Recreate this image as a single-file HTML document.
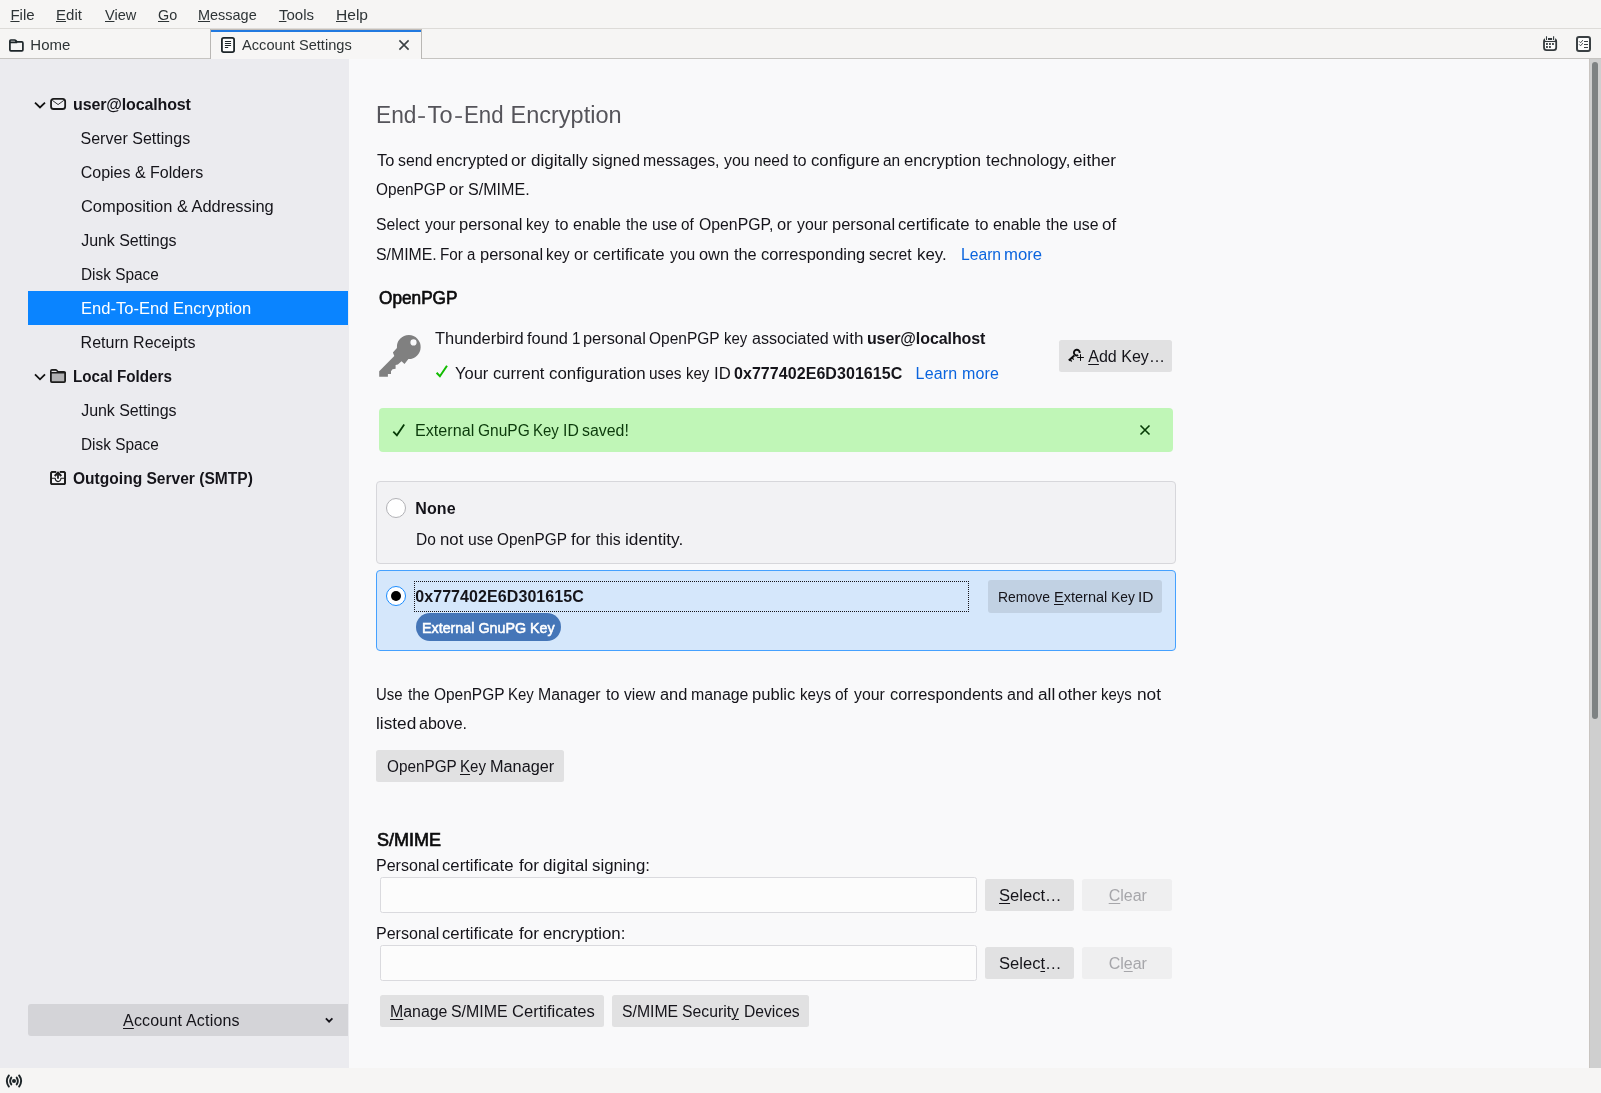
<!DOCTYPE html>
<html><head><meta charset="utf-8"><title>Account Settings</title>
<style>
html,body{margin:0;padding:0}
body{width:1601px;height:1093px;position:relative;overflow:hidden;background:#f6f5f4;font-family:"Liberation Sans",sans-serif;color:#15141a}
.r{position:absolute;box-sizing:border-box}
.t{position:absolute;white-space:pre;line-height:20px}
.t u{text-decoration-thickness:1px;text-underline-offset:1px}
svg{position:absolute;overflow:visible}
.btn{background:#e1e1e2;border-radius:2.5px}
</style></head><body>
<!-- chrome -->
<div class="r" style="left:0;top:0;width:1601px;height:28px;background:#f6f5f4"></div>
<div class="r" style="left:0;top:28px;width:1601px;height:1px;background:#dddbd8"></div>
<div class="r" style="left:0;top:29px;width:1601px;height:29px;background:#f6f5f4"></div>
<div class="r" style="left:0;top:58px;width:1601px;height:1px;background:#c6c4c1"></div>
<!-- active tab -->
<div class="r" style="left:210px;top:29px;width:212px;height:30px;background:#f7f6f5;border-left:1px solid #b9b7b4;border-right:1px solid #b9b7b4"></div>
<div class="r" style="left:211px;top:29px;width:210px;height:1px;background:#c3bcb6"></div>
<div class="r" style="left:211px;top:30px;width:210px;height:2px;background:#2179e0"></div>
<!-- sidebar / content -->
<div class="r" style="left:0;top:59px;width:349px;height:1009px;background:#ebebef"></div>
<div class="r" style="left:349px;top:59px;width:1240px;height:1009px;background:#f9f9fa"></div>
<!-- scrollbar -->
<div class="r" style="left:1589px;top:59px;width:12px;height:1009px;background:#cfcfcf;border-left:1px solid #c9c5c1"></div>
<div class="r" style="left:1592px;top:62px;width:6px;height:657px;background:#7e8283;border-radius:3px"></div>
<!-- status bar -->
<div class="r" style="left:0;top:1068px;width:1601px;height:25px;background:#f6f5f4"></div>
<!-- sidebar items -->
<div class="r" style="left:28px;top:291px;width:320px;height:34px;background:#0a84ff"></div>
<div class="r" style="left:28px;top:1004px;width:320px;height:32px;background:#d4d4d8;border-radius:3px 0 0 3px"></div>
<!-- content -->
<div class="r btn" style="left:1059px;top:340px;width:113px;height:32px"></div>
<div class="r" style="left:379px;top:408px;width:794px;height:44px;background:#c0f6b7;border-radius:4px"></div>
<div class="r" style="left:376px;top:481px;width:800px;height:83px;background:#f2f2f4;border:1px solid #d7d7db;border-radius:4px"></div>
<div class="r" style="left:376px;top:570px;width:800px;height:81px;background:#d5e7fb;border:1px solid #45a1ff;border-radius:4px"></div>
<div class="r" style="left:386px;top:498px;width:20px;height:20px;background:#fff;border:1px solid #b2b2b6;border-radius:50%"></div>
<div class="r" style="left:386px;top:586px;width:20px;height:20px;background:#fff;border:1px solid #1a8cff;border-radius:50%"></div>
<div class="r" style="left:391px;top:591px;width:10px;height:10px;background:#000;border-radius:50%"></div>
<div class="r" style="left:414px;top:581px;width:555px;height:31px;border:1px dotted #15141a"></div>
<div class="r" style="left:416px;top:612.5px;width:145px;height:28.5px;background:#4576b8;border-radius:14px"></div>
<div class="r" style="left:988px;top:580px;width:174px;height:33px;background:#c1d1e3;border-radius:3px"></div>
<div class="r btn" style="left:376px;top:750px;width:188px;height:32px"></div>
<div class="r" style="left:380px;top:877px;width:597px;height:36px;background:#fcfcfc;border:1px solid #dadade;border-radius:2.5px"></div>
<div class="r" style="left:380px;top:945px;width:597px;height:36px;background:#fcfcfc;border:1px solid #dadade;border-radius:2.5px"></div>
<div class="r btn" style="left:985px;top:879px;width:89px;height:32px"></div>
<div class="r btn" style="left:985px;top:947px;width:89px;height:32px"></div>
<div class="r" style="left:1082px;top:879px;width:90px;height:32px;background:#efeff0;border-radius:2.5px"></div>
<div class="r" style="left:1082px;top:947px;width:90px;height:32px;background:#efeff0;border-radius:2.5px"></div>
<div class="r btn" style="left:380px;top:995px;width:224px;height:32px"></div>
<div class="r btn" style="left:612px;top:995px;width:197px;height:32px"></div>
<!--ICONS_START-->
<svg width="1601" height="1093" viewBox="0 0 1601 1093" style="left:0;top:0" fill="none" stroke-linecap="round" stroke-linejoin="round">
<!-- Home tab folder -->
<path d="M9.9 41.6 V40.9 Q9.9 40 10.8 40 H14.6 Q15.3 40 15.8 40.6 L16.9 41.9 H21.9 Q22.9 41.9 22.9 42.9 V49.8 Q22.9 50.8 21.9 50.8 H10.9 Q9.9 50.8 9.9 49.8 Z M10 42.4 H16.5" stroke="#1d2528" stroke-width="1.7"/>
<!-- doc icon in active tab -->
<rect x="221.9" y="37.9" width="12.2" height="14.2" rx="1.8" stroke="#1d2528" stroke-width="1.8" fill="#fcfcfc"/>
<path d="M225.3 41.5 H230.7 M225.3 43.5 H230.7 M225.3 45.5 H230.7 M225.3 47.5 H227.8" stroke="#1d2528" stroke-width="1"/>
<!-- tab close -->
<path d="M399.4 40.4 L408.6 49.6 M408.6 40.4 L399.4 49.6" stroke="#3b4144" stroke-width="1.6" stroke-linecap="butt"/>
<!-- calendar -->
<g stroke="#33393c">
<rect x="1544" y="39" width="12.2" height="11.2" rx="2.6" stroke-width="1.8" fill="#fdfdfd"/>
<path d="M1546.5 35.4 V40.5 M1553.6 35.4 V40.5" stroke="#f8f8f7" stroke-width="3" stroke-linecap="butt"/>
<path d="M1544.3 41.5 H1555.9" stroke-width="1.1" stroke-linecap="butt"/>
<path d="M1546.5 36.2 V40.1 M1553.6 36.2 V40.1" stroke-width="1.1" stroke-linecap="butt"/>
</g>
<g fill="#2b3133"><rect x="1546.05" y="43.1" width="1.8" height="1.8"/><rect x="1549.05" y="43.1" width="1.8" height="1.8"/><rect x="1552.05" y="43.1" width="1.8" height="1.8"/><rect x="1546.05" y="46.1" width="1.8" height="1.8"/><rect x="1549.05" y="46.1" width="1.8" height="1.8"/></g>
<!-- tasks -->
<g stroke="#3a4043">
<rect x="1577" y="37.1" width="13" height="13.8" rx="2" stroke-width="2" fill="#fdfdfd"/>
<path d="M1579.4 41.6 L1580.6 42.8 L1582.6 40.4 M1579.4 44.6 L1580.6 45.8 L1582.6 43.4" stroke-width="0.9"/>
<path d="M1584.4 41.5 H1587.6 M1584.4 44.5 H1587.6 M1584.4 47.5 H1587.6" stroke-width="1"/>
</g>
<!-- sidebar chevrons -->
<path d="M35 102.6 L40 107.5 L45 102.6" stroke="#111" stroke-width="1.8" stroke-linecap="butt" stroke-linejoin="miter"/>
<path d="M35 374.3 L40 379.3 L45 374.3" stroke="#111" stroke-width="1.8" stroke-linecap="butt" stroke-linejoin="miter"/>
<!-- envelope -->
<rect x="51.05" y="98.9" width="14.1" height="10.1" rx="2.6" stroke="#1b1b1c" stroke-width="1.8" fill="#f0f0f4"/>
<path d="M52.7 100.6 L58.1 104.6 L63.5 100.6" stroke="#333" stroke-width="1"/>
<!-- local folder -->
<path d="M50.9 371.4 V370.9 Q50.9 369.9 51.9 369.9 H55.6 Q56.3 369.9 56.8 370.5 L57.9 371.8 H64.1 Q65.1 371.8 65.1 372.8 V381.1 Q65.1 382.1 64.1 382.1 H51.9 Q50.9 382.1 50.9 381.1 Z" stroke="#1c1c1c" stroke-width="1.8" fill="#b1b1b3"/>
<path d="M51.6 371.2 H56 L57.6 372.6 H51.6 Z" fill="#f0f0f4" stroke="none"/>
<path d="M51 372.7 H65" stroke="#1c1c1c" stroke-width="1.4"/>
<!-- smtp -->
<path d="M55.4 471.9 H52.9 Q51.1 471.9 51.1 473.7 V482.4 Q51.1 484.2 52.9 484.2 H63.2 Q65 484.2 65 482.4 V473.7 Q65 471.9 63.2 471.9 H60.6" stroke="#1c1c1c" stroke-width="1.8" fill="none"/>
<path d="M51.9 472.8 H64.2 V483.3 H51.9 Z" fill="#f4f4f7" stroke="none"/>
<path d="M51.5 478.3 H55.2 Q55.4 481.6 58 481.6 Q60.7 481.6 60.9 478.3 H64.6" stroke="#1c1c1c" stroke-width="1.1"/>
<path d="M58 478.8 V473.4" stroke="#1c1c1c" stroke-width="1.8" stroke-linecap="butt"/>
<path d="M54.7 476 L58 472.8 L61.3 476" stroke="#1c1c1c" stroke-width="2.1" stroke-linejoin="miter" stroke-linecap="butt" fill="none"/>
<path d="M55.4 471.9 H52.9 Q51.1 471.9 51.1 473.7 V482.4 Q51.1 484.2 52.9 484.2 H63.2 Q65 484.2 65 482.4 V473.7 Q65 471.9 63.2 471.9 H60.6" stroke="#1c1c1c" stroke-width="1.8" fill="none"/>
<!-- account actions chevron -->
<path d="M325.9 1018.3 L329.1 1021.6 L332.4 1018.3" stroke="#15141a" stroke-width="1.8" stroke-linecap="butt" stroke-linejoin="miter"/>
<!-- big key -->
<path fill-rule="evenodd" fill="#808080" stroke="none" d="M408.9 335 A12 12 0 1 1 408.4 359 L404.5 363.9 L401.5 361.3 L397.9 364.6 L395.6 364.9 L395.6 368.7 L392.5 369.3 L391 371.3 L391 373.9 L387.9 373.9 L387.9 376.7 L379.2 376.7 L379.2 371.3 L394.3 355.9 L392.9 352.6 L396.9 347.9 A12 12 0 0 1 408.9 335 Z M413.5 339.3 A3.1 3.1 0 1 0 413.5 345.5 A3.1 3.1 0 1 0 413.5 339.3 Z"/>
<!-- green check -->
<path d="M436.6 372.7 L439.9 376.2 L447 365.7" stroke="#12bc00" stroke-width="2" stroke-linecap="butt" stroke-linejoin="miter"/>
<!-- small key + plus -->
<path d="M1079.7 353 A2.9 2.9 0 1 0 1078.2 355.2" stroke="#0c0c0d" stroke-width="1.9" stroke-linecap="butt"/>
<path d="M1074.3 355.6 L1068.8 360.6" stroke="#0c0c0d" stroke-width="2" stroke-linecap="butt"/>
<path d="M1070.3 359.8 L1071.7 361.5 M1072.2 358 L1073.7 359.6" stroke="#0c0c0d" stroke-width="1.3" stroke-linecap="butt"/>
<path d="M1077.2 357.5 H1083.9 M1080.5 354.2 V360.9" stroke="#0c0c0d" stroke-width="1" stroke-linecap="butt"/>
<!-- notification check + close -->
<path d="M393.3 431.7 L396.9 435.3 L404.2 424.5" stroke="#063b06" stroke-width="1.8" stroke-linecap="butt" stroke-linejoin="miter"/>
<path d="M1140.5 425.5 L1149.5 434.5 M1149.5 425.5 L1140.5 434.5" stroke="#063b06" stroke-width="1.6" stroke-linecap="butt"/>
<!-- status bar icon -->
<circle cx="14" cy="1081" r="2" fill="#1d2528" stroke="none"/>
<path d="M11.3 1077.6 Q9 1081 11.3 1084.4 M16.7 1077.6 Q19 1081 16.7 1084.4" stroke="#1d2528" stroke-width="1.9"/>
<path d="M8.9 1075.4 Q4.8 1081 8.9 1086.6 M19.1 1075.4 Q23.2 1081 19.1 1086.6" stroke="#1d2528" stroke-width="1.9"/>
</svg>
<!--ICONS_END-->
<div id="tx" style="position:absolute;left:0;top:0;width:1601px;height:1093px;will-change:transform">
<span class="t" style="left:10.40px;top:5px;font-size:15px;letter-spacing:0.000px;color:#2e3436"><u style="text-underline-offset:1.0px">F</u>ile</span>
<span class="t" style="left:56.00px;top:5px;font-size:15px;letter-spacing:0.033px;color:#2e3436"><u style="text-underline-offset:1.0px">E</u>dit</span>
<span class="t" style="left:104.90px;top:5px;font-size:15px;transform:scaleX(0.9719);transform-origin:0 0;color:#2e3436"><u style="text-underline-offset:1.0px">V</u>iew</span>
<span class="t" style="left:157.64px;top:5px;font-size:15px;transform:scaleX(0.9579);transform-origin:0 0;color:#2e3436"><u style="text-underline-offset:1.0px">G</u>o</span>
<span class="t" style="left:198.44px;top:5px;font-size:15px;transform:scaleX(0.9644);transform-origin:0 0;color:#2e3436"><u style="text-underline-offset:1.0px">M</u>essage</span>
<span class="t" style="left:278.90px;top:5px;font-size:15px;letter-spacing:0.025px;color:#2e3436"><u style="text-underline-offset:1.0px">T</u>ools</span>
<span class="t" style="left:335.56px;top:5px;font-size:15px;transform:scaleX(1.0379);transform-origin:0 0;color:#2e3436"><u style="text-underline-offset:1.0px">H</u>elp</span>
<span class="t" style="left:30.30px;top:35px;font-size:15px;letter-spacing:0.000px;color:#2e3436">Home</span>
<span class="t" style="left:242.20px;top:35px;font-size:15px;transform:scaleX(0.9750);transform-origin:0 0;color:#2e3436">Account Settings</span>
<span class="t" style="left:73.00px;top:95px;font-size:16px;font-weight:700;letter-spacing:-0.131px;color:#15141a">user@localhost</span>
<span class="t" style="left:80.50px;top:129px;font-size:16px;letter-spacing:0.018px;color:#15141a">Server Settings</span>
<span class="t" style="left:80.70px;top:163px;font-size:16px;letter-spacing:-0.007px;color:#15141a">Copies &amp; Folders</span>
<span class="t" style="left:80.67px;top:197px;font-size:16px;transform:scaleX(1.0269);transform-origin:0 0;color:#15141a">Composition &amp; Addressing</span>
<span class="t" style="left:81.20px;top:231px;font-size:16px;letter-spacing:-0.058px;color:#15141a">Junk Settings</span>
<span class="t" style="left:81.04px;top:265px;font-size:16px;transform:scaleX(0.9620);transform-origin:0 0;color:#15141a">Disk Space</span>
<span class="t" style="left:80.57px;top:299px;font-size:16px;transform:scaleX(1.0350);transform-origin:0 0;color:#ffffff">End-To-End Encryption</span>
<span class="t" style="left:80.60px;top:333px;font-size:16px;letter-spacing:0.007px;color:#15141a">Return Receipts</span>
<span class="t" style="left:73.05px;top:367px;font-size:16px;font-weight:700;transform:scaleX(0.9515);transform-origin:0 0;color:#15141a">Local Folders</span>
<span class="t" style="left:81.20px;top:401px;font-size:16px;letter-spacing:-0.058px;color:#15141a">Junk Settings</span>
<span class="t" style="left:81.04px;top:435px;font-size:16px;transform:scaleX(0.9620);transform-origin:0 0;color:#15141a">Disk Space</span>
<span class="t" style="left:72.93px;top:469px;font-size:16px;font-weight:700;transform:scaleX(0.9727);transform-origin:0 0;color:#15141a">Outgoing Server (SMTP)</span>
<span class="t" style="left:123.00px;top:1011px;font-size:16px;letter-spacing:0.196px;color:#15141a"><u style="text-underline-offset:1.7px">A</u>ccount Actions</span>
<span class="t" style="left:375.97px;top:105px;font-size:23.5px;transform:scaleX(0.9658);transform-origin:0 0;color:#55545a">End</span>
<span class="t" style="left:417.13px;top:105px;font-size:23.5px;transform:scaleX(1.1667);transform-origin:0 0;color:#6a696f">-</span>
<span class="t" style="left:427.50px;top:105px;font-size:23.5px;letter-spacing:0.300px;color:#55545a">To</span>
<span class="t" style="left:453.93px;top:105px;font-size:23.5px;transform:scaleX(1.1667);transform-origin:0 0;color:#6a696f">-</span>
<span class="t" style="left:464.41px;top:105px;font-size:23.5px;transform:scaleX(0.9447);transform-origin:0 0;color:#55545a">End</span>
<span class="t" style="left:510.60px;top:105px;font-size:23.5px;letter-spacing:-0.011px;color:#55545a">Encryption</span>
<span class="t" style="left:376.70px;top:151px;font-size:16px;transform:scaleX(1.0250);transform-origin:0 0;color:#15141a">To</span>
<span class="t" style="left:397.71px;top:151px;font-size:16px;transform:scaleX(0.9909);transform-origin:0 0;color:#15141a">send</span>
<span class="t" style="left:435.97px;top:151px;font-size:16px;transform:scaleX(1.0265);transform-origin:0 0;color:#15141a">encrypted</span>
<span class="t" style="left:511.34px;top:151px;font-size:16px;transform:scaleX(1.0600);transform-origin:0 0;color:#15141a">or</span>
<span class="t" style="left:530.83px;top:151px;font-size:16px;transform:scaleX(1.0654);transform-origin:0 0;color:#15141a">digitally</span>
<span class="t" style="left:591.88px;top:151px;font-size:16px;transform:scaleX(1.0178);transform-origin:0 0;color:#15141a">signed</span>
<span class="t" style="left:643.31px;top:151px;font-size:16px;transform:scaleX(0.9880);transform-origin:0 0;color:#15141a">messages,</span>
<span class="t" style="left:724.00px;top:151px;font-size:16px;transform:scaleX(0.9960);transform-origin:0 0;color:#15141a">you</span>
<span class="t" style="left:753.53px;top:151px;font-size:16px;transform:scaleX(0.9735);transform-origin:0 0;color:#15141a">need</span>
<span class="t" style="left:793.20px;top:151px;font-size:16px;transform:scaleX(1.0154);transform-origin:0 0;color:#15141a">to</span>
<span class="t" style="left:810.96px;top:151px;font-size:16px;transform:scaleX(1.0437);transform-origin:0 0;color:#15141a">configure</span>
<span class="t" style="left:883.44px;top:151px;font-size:16px;transform:scaleX(0.9625);transform-origin:0 0;color:#15141a">an</span>
<span class="t" style="left:904.36px;top:151px;font-size:16px;transform:scaleX(1.0431);transform-origin:0 0;color:#15141a">encryption</span>
<span class="t" style="left:986.10px;top:151px;font-size:16px;transform:scaleX(1.0456);transform-origin:0 0;color:#15141a">technology,</span>
<span class="t" style="left:1073.22px;top:151px;font-size:16px;transform:scaleX(1.0756);transform-origin:0 0;color:#15141a">either</span>
<span class="t" style="left:375.74px;top:180px;font-size:16px;transform:scaleX(0.9592);transform-origin:0 0;color:#15141a">OpenPGP</span>
<span class="t" style="left:449.37px;top:180px;font-size:16px;transform:scaleX(1.0308);transform-origin:0 0;color:#15141a">or</span>
<span class="t" style="left:468.39px;top:180px;font-size:16px;transform:scaleX(1.0059);transform-origin:0 0;color:#15141a">S/MIME.</span>
<span class="t" style="left:375.72px;top:215px;font-size:16px;transform:scaleX(0.9814);transform-origin:0 0;color:#15141a">Select</span>
<span class="t" style="left:424.50px;top:215px;font-size:16px;transform:scaleX(0.9774);transform-origin:0 0;color:#15141a">your</span>
<span class="t" style="left:459.37px;top:215px;font-size:16px;transform:scaleX(1.0322);transform-origin:0 0;color:#15141a">personal</span>
<span class="t" style="left:525.97px;top:215px;font-size:16px;transform:scaleX(0.9333);transform-origin:0 0;color:#15141a">key</span>
<span class="t" style="left:554.90px;top:215px;font-size:16px;transform:scaleX(1.0077);transform-origin:0 0;color:#15141a">to</span>
<span class="t" style="left:572.60px;top:215px;font-size:16px;transform:scaleX(0.9979);transform-origin:0 0;color:#15141a">enable</span>
<span class="t" style="left:626.10px;top:215px;font-size:16px;transform:scaleX(0.9727);transform-origin:0 0;color:#15141a">the</span>
<span class="t" style="left:652.12px;top:215px;font-size:16px;transform:scaleX(0.9833);transform-origin:0 0;color:#15141a">use</span>
<span class="t" style="left:681.35px;top:215px;font-size:16px;transform:scaleX(0.9538);transform-origin:0 0;color:#15141a">of</span>
<span class="t" style="left:699.31px;top:215px;font-size:16px;transform:scaleX(0.9877);transform-origin:0 0;color:#15141a">OpenPGP,</span>
<span class="t" style="left:776.97px;top:215px;font-size:16px;transform:scaleX(1.0308);transform-origin:0 0;color:#15141a">or</span>
<span class="t" style="left:797.00px;top:215px;font-size:16px;transform:scaleX(0.9871);transform-origin:0 0;color:#15141a">your</span>
<span class="t" style="left:832.17px;top:215px;font-size:16px;transform:scaleX(1.0271);transform-origin:0 0;color:#15141a">personal</span>
<span class="t" style="left:898.36px;top:215px;font-size:16px;transform:scaleX(1.0433);transform-origin:0 0;color:#15141a">certificate</span>
<span class="t" style="left:974.90px;top:215px;font-size:16px;transform:scaleX(1.0077);transform-origin:0 0;color:#15141a">to</span>
<span class="t" style="left:992.60px;top:215px;font-size:16px;transform:scaleX(0.9957);transform-origin:0 0;color:#15141a">enable</span>
<span class="t" style="left:1046.00px;top:215px;font-size:16px;transform:scaleX(0.9955);transform-origin:0 0;color:#15141a">the</span>
<span class="t" style="left:1072.51px;top:215px;font-size:16px;transform:scaleX(0.9875);transform-origin:0 0;color:#15141a">use</span>
<span class="t" style="left:1101.74px;top:215px;font-size:16px;transform:scaleX(1.0600);transform-origin:0 0;color:#15141a">of</span>
<span class="t" style="left:375.71px;top:245px;font-size:16px;transform:scaleX(0.9898);transform-origin:0 0;color:#15141a">S/MIME.</span>
<span class="t" style="left:439.75px;top:245px;font-size:16px;transform:scaleX(0.9522);transform-origin:0 0;color:#15141a">For</span>
<span class="t" style="left:467.26px;top:245px;font-size:16px;transform:scaleX(0.9400);transform-origin:0 0;color:#15141a">a</span>
<span class="t" style="left:479.67px;top:245px;font-size:16px;transform:scaleX(1.0271);transform-origin:0 0;color:#15141a">personal</span>
<span class="t" style="left:545.95px;top:245px;font-size:16px;transform:scaleX(0.9542);transform-origin:0 0;color:#15141a">key</span>
<span class="t" style="left:574.39px;top:245px;font-size:16px;transform:scaleX(1.0077);transform-origin:0 0;color:#15141a">or</span>
<span class="t" style="left:593.05px;top:245px;font-size:16px;transform:scaleX(1.0463);transform-origin:0 0;color:#15141a">certificate</span>
<span class="t" style="left:669.80px;top:245px;font-size:16px;transform:scaleX(0.9760);transform-origin:0 0;color:#15141a">you</span>
<span class="t" style="left:698.78px;top:245px;font-size:16px;transform:scaleX(1.0214);transform-origin:0 0;color:#15141a">own</span>
<span class="t" style="left:734.00px;top:245px;font-size:16px;transform:scaleX(1.0182);transform-origin:0 0;color:#15141a">the</span>
<span class="t" style="left:760.97px;top:245px;font-size:16px;transform:scaleX(1.0280);transform-origin:0 0;color:#15141a">corresponding</span>
<span class="t" style="left:869.42px;top:245px;font-size:16px;transform:scaleX(0.9791);transform-origin:0 0;color:#15141a">secret</span>
<span class="t" style="left:917.05px;top:245px;font-size:16px;transform:scaleX(1.0538);transform-origin:0 0;color:#15141a">key.</span>
<span class="t" style="left:960.52px;top:245px;font-size:16px;transform:scaleX(0.9795);transform-origin:0 0;color:#0a64de">Learn</span>
<span class="t" style="left:1004.26px;top:245px;font-size:16px;transform:scaleX(1.0429);transform-origin:0 0;color:#0a64de">more</span>
<span class="t" style="left:378.75px;top:288px;font-size:18px;font-weight:400;-webkit-text-stroke:0.65px currentColor;transform:scaleX(0.9568);transform-origin:0 0;color:#0c0c0d">OpenPGP</span>
<span class="t" style="left:434.50px;top:329px;font-size:16px;transform:scaleX(1.0271);transform-origin:0 0;color:#15141a">Thunderbird</span>
<span class="t" style="left:527.40px;top:329px;font-size:16px;transform:scaleX(1.0231);transform-origin:0 0;color:#15141a">found</span>
<span class="t" style="left:571.96px;top:329px;font-size:16px;transform:scaleX(0.9400);transform-origin:0 0;color:#15141a">1</span>
<span class="t" style="left:583.38px;top:329px;font-size:16px;transform:scaleX(1.0237);transform-origin:0 0;color:#15141a">personal</span>
<span class="t" style="left:649.43px;top:329px;font-size:16px;transform:scaleX(0.9690);transform-origin:0 0;color:#15141a">OpenPGP</span>
<span class="t" style="left:723.87px;top:329px;font-size:16px;transform:scaleX(0.9333);transform-origin:0 0;color:#15141a">key</span>
<span class="t" style="left:751.80px;top:329px;font-size:16px;transform:scaleX(1.0041);transform-origin:0 0;color:#15141a">associated</span>
<span class="t" style="left:832.70px;top:329px;font-size:16px;transform:scaleX(1.0679);transform-origin:0 0;color:#15141a">with</span>
<span class="t" style="left:866.90px;top:329px;font-size:16px;font-weight:700;letter-spacing:-0.085px;color:#15141a">user@localhost</span>
<span class="t" style="left:455.17px;top:364px;font-size:16px;transform:scaleX(1.0290);transform-origin:0 0;color:#15141a">Your</span>
<span class="t" style="left:492.67px;top:364px;font-size:16px;transform:scaleX(1.0327);transform-origin:0 0;color:#15141a">current</span>
<span class="t" style="left:548.85px;top:364px;font-size:16px;transform:scaleX(1.0544);transform-origin:0 0;color:#15141a">configuration</span>
<span class="t" style="left:649.44px;top:364px;font-size:16px;transform:scaleX(0.9625);transform-origin:0 0;color:#15141a">uses</span>
<span class="t" style="left:685.87px;top:364px;font-size:16px;transform:scaleX(0.9333);transform-origin:0 0;color:#15141a">key</span>
<span class="t" style="left:713.76px;top:364px;font-size:16px;transform:scaleX(1.0429);transform-origin:0 0;color:#15141a">ID</span>
<span class="t" style="left:734.00px;top:364px;font-size:16px;font-weight:700;letter-spacing:0.059px;color:#15141a">0x777402E6D301615C</span>
<span class="t" style="left:915.60px;top:364px;font-size:16px;letter-spacing:0.156px;color:#0a64de">Learn more</span>
<span class="t" style="left:1088.20px;top:347px;font-size:16px;letter-spacing:0.029px;color:#15141a"><u style="text-underline-offset:1.7px">A</u>dd Key…</span>
<span class="t" style="left:414.79px;top:421px;font-size:16px;transform:scaleX(1.0088);transform-origin:0 0;color:#0b3a0b">External</span>
<span class="t" style="left:477.93px;top:421px;font-size:16px;transform:scaleX(0.9686);transform-origin:0 0;color:#0b3a0b">GnuPG</span>
<span class="t" style="left:532.96px;top:421px;font-size:16px;transform:scaleX(0.9385);transform-origin:0 0;color:#0b3a0b">Key</span>
<span class="t" style="left:562.91px;top:421px;font-size:16px;transform:scaleX(0.9857);transform-origin:0 0;color:#0b3a0b">ID</span>
<span class="t" style="left:582.31px;top:421px;font-size:16px;transform:scaleX(0.9933);transform-origin:0 0;color:#0b3a0b">saved!</span>
<span class="t" style="left:415.20px;top:499px;font-size:16px;font-weight:700;letter-spacing:0.133px;color:#15141a">None</span>
<span class="t" style="left:416.03px;top:530px;font-size:16px;transform:scaleX(0.9684);transform-origin:0 0;color:#15141a">Do</span>
<span class="t" style="left:439.95px;top:530px;font-size:16px;transform:scaleX(1.0476);transform-origin:0 0;color:#15141a">not</span>
<span class="t" style="left:467.62px;top:530px;font-size:16px;transform:scaleX(0.9792);transform-origin:0 0;color:#15141a">use</span>
<span class="t" style="left:496.74px;top:530px;font-size:16px;transform:scaleX(0.9592);transform-origin:0 0;color:#15141a">OpenPGP</span>
<span class="t" style="left:571.40px;top:530px;font-size:16px;transform:scaleX(1.0556);transform-origin:0 0;color:#15141a">for</span>
<span class="t" style="left:596.00px;top:530px;font-size:16px;transform:scaleX(0.9840);transform-origin:0 0;color:#15141a">this</span>
<span class="t" style="left:625.12px;top:530px;font-size:16px;transform:scaleX(1.0800);transform-origin:0 0;color:#15141a">identity.</span>
<span class="t" style="left:415.20px;top:587px;font-size:16px;font-weight:700;letter-spacing:0.082px;color:#15141a">0x777402E6D301615C</span>
<span class="t" style="left:421.95px;top:618px;font-size:15px;font-weight:400;-webkit-text-stroke:0.55px currentColor;transform:scaleX(0.9532);transform-origin:0 0;color:#ffffff">External GnuPG Key</span>
<span class="t" style="left:998.47px;top:587px;font-size:15px;transform:scaleX(0.9296);transform-origin:0 0;color:#15141a">Remove</span>
<span class="t" style="left:1054.23px;top:587px;font-size:15px;transform:scaleX(0.9679);transform-origin:0 0;color:#15141a"><u style="text-underline-offset:1.7px">E</u>xternal</span>
<span class="t" style="left:1111.18px;top:587px;font-size:15px;transform:scaleX(0.9200);transform-origin:0 0;color:#15141a">Key</span>
<span class="t" style="left:1137.97px;top:587px;font-size:15px;transform:scaleX(1.0308);transform-origin:0 0;color:#15141a">ID</span>
<span class="t" style="left:375.77px;top:685px;font-size:16px;transform:scaleX(0.9333);transform-origin:0 0;color:#15141a">Use</span>
<span class="t" style="left:407.50px;top:685px;font-size:16px;transform:scaleX(0.9727);transform-origin:0 0;color:#15141a">the</span>
<span class="t" style="left:433.53px;top:685px;font-size:16px;transform:scaleX(0.9662);transform-origin:0 0;color:#15141a">OpenPGP</span>
<span class="t" style="left:507.77px;top:685px;font-size:16px;transform:scaleX(0.9346);transform-origin:0 0;color:#15141a">Key</span>
<span class="t" style="left:537.61px;top:685px;font-size:16px;transform:scaleX(0.9903);transform-origin:0 0;color:#15141a">Manager</span>
<span class="t" style="left:605.60px;top:685px;font-size:16px;transform:scaleX(1.0077);transform-origin:0 0;color:#15141a">to</span>
<span class="t" style="left:624.30px;top:685px;font-size:16px;transform:scaleX(0.9750);transform-origin:0 0;color:#15141a">view</span>
<span class="t" style="left:660.08px;top:685px;font-size:16px;transform:scaleX(1.0240);transform-origin:0 0;color:#15141a">and</span>
<span class="t" style="left:691.31px;top:685px;font-size:16px;transform:scaleX(0.9929);transform-origin:0 0;color:#15141a">manage</span>
<span class="t" style="left:752.47px;top:685px;font-size:16px;transform:scaleX(1.0350);transform-origin:0 0;color:#15141a">public</span>
<span class="t" style="left:799.56px;top:685px;font-size:16px;transform:scaleX(0.9406);transform-origin:0 0;color:#15141a">keys</span>
<span class="t" style="left:835.23px;top:685px;font-size:16px;transform:scaleX(0.9692);transform-origin:0 0;color:#15141a">of</span>
<span class="t" style="left:854.40px;top:685px;font-size:16px;transform:scaleX(0.9903);transform-origin:0 0;color:#15141a">your</span>
<span class="t" style="left:889.68px;top:685px;font-size:16px;transform:scaleX(1.0239);transform-origin:0 0;color:#15141a">correspondents</span>
<span class="t" style="left:1006.90px;top:685px;font-size:16px;transform:scaleX(1.0040);transform-origin:0 0;color:#15141a">and</span>
<span class="t" style="left:1037.52px;top:685px;font-size:16px;transform:scaleX(1.0786);transform-origin:0 0;color:#15141a">all</span>
<span class="t" style="left:1058.23px;top:685px;font-size:16px;transform:scaleX(1.0686);transform-origin:0 0;color:#15141a">other</span>
<span class="t" style="left:1101.37px;top:685px;font-size:16px;transform:scaleX(0.9344);transform-origin:0 0;color:#15141a">keys</span>
<span class="t" style="left:1136.72px;top:685px;font-size:16px;transform:scaleX(1.0800);transform-origin:0 0;color:#15141a">not</span>
<span class="t" style="left:375.62px;top:714px;font-size:16px;transform:scaleX(1.0771);transform-origin:0 0;color:#15141a">listed</span>
<span class="t" style="left:419.00px;top:714px;font-size:16px;transform:scaleX(1.0000);transform-origin:0 0;color:#15141a">above.</span>
<span class="t" style="left:386.84px;top:757px;font-size:16px;transform:scaleX(0.9563);transform-origin:0 0;color:#15141a">OpenPGP</span>
<span class="t" style="left:460.36px;top:757px;font-size:16px;transform:scaleX(0.9423);transform-origin:0 0;color:#15141a"><u style="text-underline-offset:1.7px">K</u>ey</span>
<span class="t" style="left:490.38px;top:757px;font-size:16px;transform:scaleX(1.0161);transform-origin:0 0;color:#15141a">Manager</span>
<span class="t" style="left:377.47px;top:830px;font-size:17.5px;font-weight:400;-webkit-text-stroke:0.65px currentColor;transform:scaleX(1.0295);transform-origin:0 0;color:#0c0c0d">S/MIME</span>
<span class="t" style="left:375.70px;top:856px;font-size:16px;transform:scaleX(1.0025);transform-origin:0 0;color:#15141a">Personal</span>
<span class="t" style="left:442.41px;top:856px;font-size:16px;transform:scaleX(1.0440);transform-origin:0 0;color:#15141a">certificate</span>
<span class="t" style="left:519.00px;top:856px;font-size:16px;transform:scaleX(1.0722);transform-origin:0 0;color:#15141a">for</span>
<span class="t" style="left:542.82px;top:856px;font-size:16px;transform:scaleX(1.0775);transform-origin:0 0;color:#15141a">digital</span>
<span class="t" style="left:591.55px;top:856px;font-size:16px;transform:scaleX(1.0509);transform-origin:0 0;color:#15141a">signing:</span>
<span class="t" style="left:999.36px;top:886px;font-size:16px;transform:scaleX(1.0351);transform-origin:0 0;color:#15141a"><u style="text-underline-offset:1.7px">S</u>elect…</span>
<span class="t" style="left:1108.70px;top:886px;font-size:16px;letter-spacing:0.000px;color:#a6a6aa"><u style="text-underline-offset:1.7px">C</u>lear</span>
<span class="t" style="left:375.70px;top:924px;font-size:16px;transform:scaleX(1.0025);transform-origin:0 0;color:#15141a">Personal</span>
<span class="t" style="left:442.41px;top:924px;font-size:16px;transform:scaleX(1.0440);transform-origin:0 0;color:#15141a">certificate</span>
<span class="t" style="left:519.00px;top:924px;font-size:16px;transform:scaleX(1.0722);transform-origin:0 0;color:#15141a">for</span>
<span class="t" style="left:542.85px;top:924px;font-size:16px;transform:scaleX(1.0526);transform-origin:0 0;color:#15141a">encryption:</span>
<span class="t" style="left:999.36px;top:954px;font-size:16px;transform:scaleX(1.0351);transform-origin:0 0;color:#15141a">Selec<u style="text-underline-offset:1.7px">t</u>…</span>
<span class="t" style="left:1108.70px;top:954px;font-size:16px;letter-spacing:0.000px;color:#a6a6aa">Cl<u style="text-underline-offset:1.7px">e</u>ar</span>
<span class="t" style="left:390.21px;top:1002px;font-size:16px;transform:scaleX(0.9929);transform-origin:0 0;color:#15141a"><u style="text-underline-offset:1.7px">M</u>anage</span>
<span class="t" style="left:451.41px;top:1002px;font-size:16px;transform:scaleX(0.9945);transform-origin:0 0;color:#15141a">S/MIME</span>
<span class="t" style="left:511.66px;top:1002px;font-size:16px;transform:scaleX(1.0354);transform-origin:0 0;color:#15141a">Certificates</span>
<span class="t" style="left:622.41px;top:1002px;font-size:16px;transform:scaleX(0.9855);transform-origin:0 0;color:#15141a">S/MIME</span>
<span class="t" style="left:682.22px;top:1002px;font-size:16px;transform:scaleX(0.9842);transform-origin:0 0;color:#15141a">Securit<u style="text-underline-offset:1.7px">y</u></span>
<span class="t" style="left:743.92px;top:1002px;font-size:16px;transform:scaleX(0.9786);transform-origin:0 0;color:#15141a">Devices</span>
</div>
</body></html>
